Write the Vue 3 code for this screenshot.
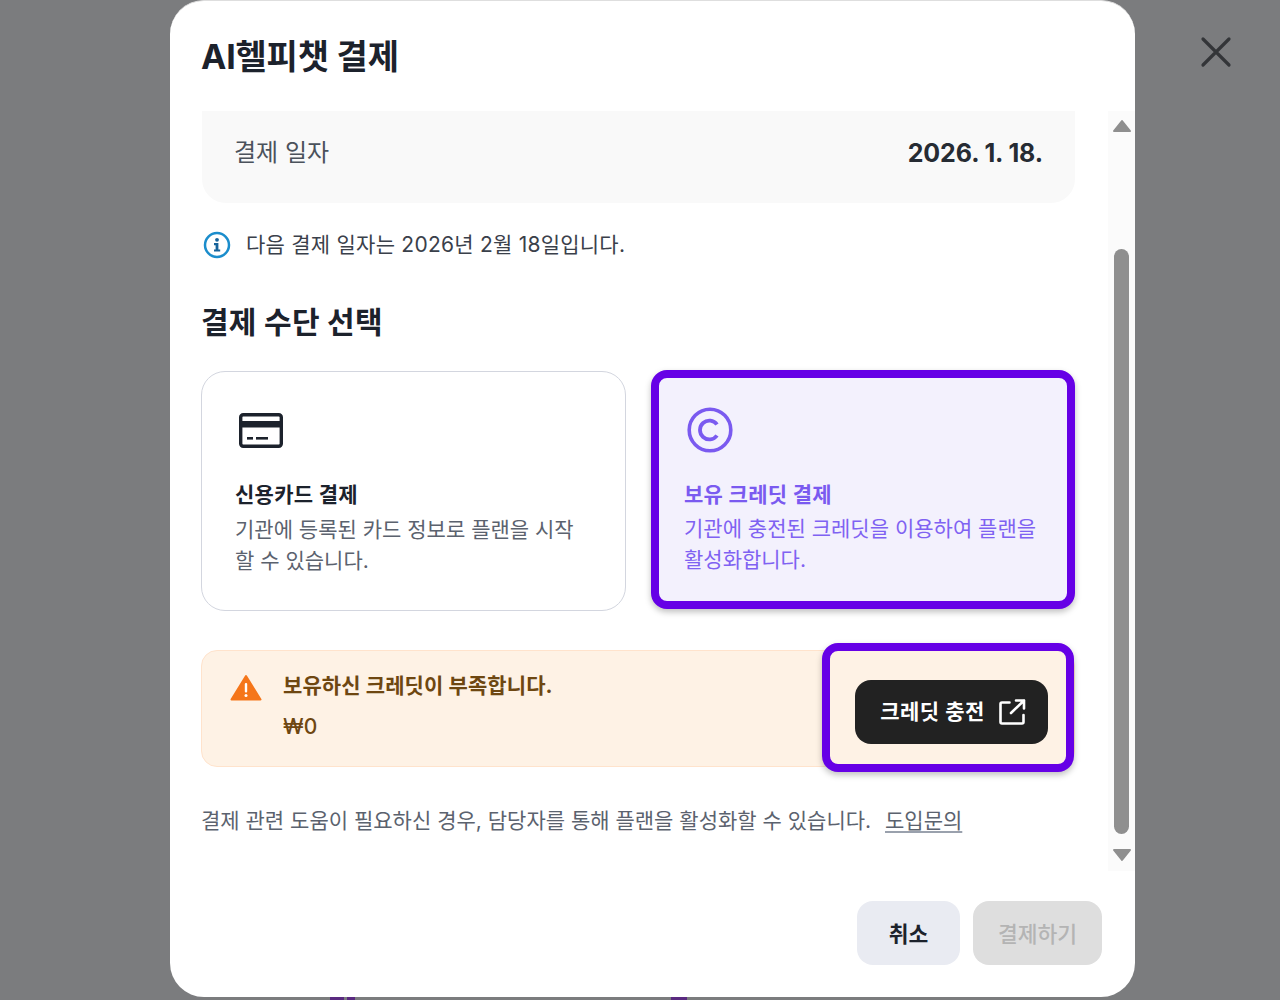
<script setup>
// 결제 수단 카드 목록
const methods = [
  {
    id: 'card',
    title: '신용카드 결제',
    desc: '기관에 등록된 카드 정보로 플랜을 시작할 수 있습니다.',
    selected: false
  },
  {
    id: 'credit',
    title: '보유 크레딧 결제',
    desc: '기관에 충전된 크레딧을 이용하여 플랜을 활성화합니다.',
    selected: true
  }
]
</script>

<template>
  <div class="overlay">
    <div class="modal">
      <h1 class="title">AI헬피챗 결제</h1>

      <div class="scroll-area">
        <div class="content">
          <div class="date-panel">
            <span class="date-label">결제 일자</span>
            <strong class="date-value">2026. 1. 18.</strong>
          </div>

          <div class="next-date">
            <svg class="info-icon" width="28" height="28" viewBox="0 0 28 28">
              <circle cx="14" cy="14" r="12" fill="none" stroke="#1b8dcc" stroke-width="2.5" />
              <circle cx="14" cy="8.8" r="1.9" fill="#17639a" />
              <path d="M11 12h4.4v6.4h1.8v2.2h-6.2v-2.2h1.6v-4.2H11z" fill="#17639a" />
            </svg>
            <span>다음 결제 일자는 2026년 2월 18일입니다.</span>
          </div>

          <h2 class="section-title">결제 수단 선택</h2>

          <div class="methods">
            <div
              v-for="method in methods"
              :key="method.id"
              class="method"
              :class="{ selected: method.selected }"
            >
              <svg v-if="method.id === 'card'" class="method-icon" width="48" height="48" viewBox="0 0 48 48">
                <rect x="3.7" y="7.7" width="40.6" height="31.6" rx="2.5" fill="none" stroke="#1c222c" stroke-width="3.4" />
                <rect x="4" y="14" width="40" height="6.5" fill="#1c222c" />
                <rect x="10" y="30" width="6" height="2.6" fill="#1c222c" />
                <rect x="19" y="30" width="12" height="2.6" fill="#1c222c" />
              </svg>
              <svg v-else class="method-icon" width="48" height="48" viewBox="0 0 48 48">
                <circle cx="24" cy="24" r="20.8" fill="none" stroke="#7a5af0" stroke-width="3.6" />
                <path d="M31 18.5a9.4 9.4 0 1 0 0 11" fill="none" stroke="#7a5af0" stroke-width="3.8" />
              </svg>
              <div class="method-title">{{ method.title }}</div>
              <p class="method-desc">{{ method.desc }}</p>
            </div>
          </div>

          <div class="alert">
            <svg class="alert-icon" width="32" height="28" viewBox="0 0 32 28">
              <path d="M16 2 30.5 25.5H1.5z" fill="#f5761a" stroke="#f5761a" stroke-width="2" stroke-linejoin="round" />
              <rect x="14.8" y="9" width="2.4" height="9.5" rx="1.1" fill="#fff" />
              <circle cx="16" cy="21.6" r="1.5" fill="#fff" />
            </svg>
            <div class="alert-text">
              <div class="alert-title">보유하신 크레딧이 부족합니다.</div>
              <div class="alert-amount">₩0</div>
            </div>
            <div class="charge-highlight">
              <button class="charge-btn" type="button">
                <span class="charge-label">크레딧 충전</span>
                <svg width="28" height="28" viewBox="0 0 28 28" fill="none" stroke="#fff" stroke-width="2.6" stroke-linejoin="round" stroke-linecap="round">
                  <path d="M11.5 4.5H4a1.5 1.5 0 0 0-1.5 1.5v18A1.5 1.5 0 0 0 4 25.5h20a1.5 1.5 0 0 0 1.5-1.5v-7" />
                  <path d="M13 15 26 2.5M18 2.5h8v8" />
                </svg>
              </button>
            </div>
          </div>

          <p class="help">
            결제 관련 도움이 필요하신 경우, 담당자를 통해 플랜을 활성화할 수 있습니다.
            <a class="help-link">도입문의</a>
          </p>
        </div>

        <div class="scrollbar">
          <svg width="20" height="14" viewBox="0 0 20 14"><path d="M10 2 18 12H2z" fill="#8f8f8f" stroke="#8f8f8f" stroke-width="2" stroke-linejoin="round" /></svg>
          <div class="thumb"></div>
          <svg width="20" height="14" viewBox="0 0 20 14"><path d="M2 2H18L10 12z" fill="#8f8f8f" stroke="#8f8f8f" stroke-width="2" stroke-linejoin="round" /></svg>
        </div>
      </div>

      <div class="footer">
        <button class="btn btn-cancel" type="button">취소</button>
        <button class="btn btn-pay" type="button" disabled>결제하기</button>
      </div>
    </div>

    <button class="close" type="button" aria-label="닫기">
      <svg width="32" height="32" viewBox="0 0 32 32" fill="none" stroke="#333538" stroke-width="3.2" stroke-linecap="round">
        <path d="M3 3 29 29M29 3 3 29" />
      </svg>
    </button>

    <span class="peek peek-a"></span>
    <span class="peek peek-b"></span>
    <span class="peek peek-c"></span>
  </div>
</template>

<style>
html,
body {
  margin: 0;
  background: #7b7c7e;
}
</style>

<style scoped>
.overlay {
  position: relative;
  width: 1280px;
  height: 1000px;
  overflow: hidden;
  background: #7b7c7e;
  font-family: Inter, "Noto Sans CJK KR", "Noto Sans", sans-serif;
}
.modal {
  box-sizing: border-box;
  display: flex;
  flex-direction: column;
  width: 965px;
  height: 997px;
  margin-left: 170px;
  background: #fff;
  border-top: 1px solid #dedede;
  border-radius: 34px;
  overflow: hidden;
}
.title {
  margin: 0;
  height: 110px;
  padding-left: 31px;
  font-size: 34px;
  font-weight: 700;
  line-height: 112px;
  color: #1c222c;
  letter-spacing: -0.2px;
}
.scroll-area {
  display: flex;
  height: 760px;
}
.content {
  flex: 1;
  min-width: 0;
  padding: 0 33px 0 32px;
}
.date-panel {
  box-sizing: border-box;
  display: flex;
  align-items: center;
  justify-content: space-between;
  height: 92px;
  padding: 0 32px 14px;
  background: #f9f9f9;
  border-radius: 0 0 24px 24px;
  font-size: 24px;
}
.date-label {
  color: #4b525c;
}
.date-value {
  margin-top: 6px;
  color: #262b33;
  font-size: 25px;
  font-weight: 700;
  letter-spacing: -0.1px;
}
.next-date {
  display: flex;
  align-items: center;
  gap: 15px;
  height: 28px;
  margin-top: 26px;
  font-size: 21px;
  letter-spacing: 0.24px;
  color: #3a404a;
}
.info-icon {
  flex: none;
  margin: 4px 0 0 1px;
}
.section-title {
  margin: 45px 0 0 -1px;
  font-size: 30px;
  font-weight: 700;
  line-height: 40px;
  letter-spacing: 0.25px;
  color: #1c222c;
}
.methods {
  display: grid;
  grid-template-columns: 425px 424px;
  gap: 25px;
  align-items: start;
  margin: 29px 0 0 -1px;
}
.method {
  box-sizing: border-box;
  height: 240px;
  padding: 35px 46px 0 33px;
  background: #fff;
  border: 1px solid #d3d6df;
  border-radius: 24px;
  color: #1c222c;
}
.method.selected {
  height: 239px;
  margin-top: -1px;
  padding: 28px 20px 0 25px;
  background: #f3f1fd;
  border: 8px solid #6600e6;
  border-radius: 16px;
  box-shadow: 0 3px 6px rgba(0, 0, 0, 0.25);
  color: #7a5af0;
}
.method-icon {
  display: block;
  margin-left: 2px;
}
.method-title {
  margin-top: 24px;
  font-size: 21px;
  font-weight: 700;
  line-height: 31px;
  letter-spacing: 0.3px;
}
.method.selected .method-title {
  margin-top: 25px;
}
.method-desc {
  margin: 4px 0 0;
  font-size: 21px;
  line-height: 31px;
  color: #5b626e;
  word-break: break-all;
}
.method.selected .method-desc {
  margin-top: 3px;
  color: #7f62f2;
  word-break: keep-all;
}
.alert {
  position: relative;
  box-sizing: border-box;
  display: flex;
  align-items: flex-start;
  gap: 21px;
  height: 117px;
  margin: 39px 0 0 -1px;
  padding: 21px 0 0 28px;
  background: #fef2e5;
  border: 1px solid #ffe3cc;
  border-radius: 16px;
}
.alert-icon {
  flex: none;
  margin-top: 2px;
}
.alert-title {
  font-size: 21px;
  font-weight: 700;
  line-height: 28px;
  letter-spacing: 0.1px;
  color: #6e4711;
}
.alert-amount {
  margin-top: 13px;
  font-size: 21px;
  font-weight: 500;
  line-height: 28px;
  color: #6e4711;
}
/* 가이드 하이라이트가 충전 버튼 위에 겹쳐지는 박스 */
.charge-highlight {
  position: absolute;
  top: -8px;
  right: 0;
  box-sizing: border-box;
  display: flex;
  align-items: center;
  justify-content: center;
  width: 252px;
  height: 129px;
  background: #fef2e5;
  border: 8px solid #6600e6;
  border-radius: 16px;
  box-shadow: 0 3px 6px rgba(0, 0, 0, 0.25);
}
.charge-btn {
  box-sizing: border-box;
  display: flex;
  align-items: center;
  justify-content: center;
  gap: 13px;
  flex: none;
  width: 193px;
  height: 64px;
  padding: 0 0 0 4px;
  margin: 8px 0 0 6px;
  background: #222;
  border: 0;
  border-radius: 16px;
  color: #fff;
  font-family: inherit;
  font-size: 21px;
  font-weight: 700;
}
.charge-label {
  margin-bottom: 4px;
  letter-spacing: 0.5px;
}
.help {
  margin: 39px 0 0 -1px;
  font-size: 21px;
  line-height: 30px;
  color: #5b626e;
  white-space: nowrap;
}
.help-link {
  margin-left: 8px;
  color: #5b626e;
  text-decoration: underline;
  text-decoration-color: #9aa1ad;
  text-underline-offset: 3px;
}
.scrollbar {
  flex: none;
  box-sizing: border-box;
  display: flex;
  flex-direction: column;
  align-items: center;
  width: 27px;
  padding-top: 8px;
  background: #fbfbfb;
}
.thumb {
  width: 15px;
  height: 585px;
  margin: 116px 0 14px;
  background: #8f8f8f;
  border-radius: 8px;
}
.footer {
  display: flex;
  justify-content: flex-end;
  gap: 13px;
  padding: 30px 33px 0 0;
}
.btn {
  height: 64px;
  padding: 0 0 2px;
  border: 0;
  border-radius: 16px;
  font-family: inherit;
  font-size: 21.5px;
}
.btn-cancel {
  width: 103px;
  background: #e9ebf2;
  color: #1c222c;
  font-weight: 700;
}
.btn-pay {
  width: 129px;
  background: #dedede;
  color: #b4b4b4;
  font-weight: 500;
}
.close {
  position: absolute;
  top: 36px;
  left: 1200px;
  width: 32px;
  height: 32px;
  padding: 0;
  background: none;
  border: 0;
}
/* 모달 뒤 배경 화면이 아래쪽에 살짝 보이는 부분 */
.peek {
  position: absolute;
  bottom: 0;
  height: 3px;
  background: #5a2a80;
}
.peek-a {
  left: 330px;
  width: 14px;
}
.peek-b {
  left: 347px;
  width: 8px;
}
.peek-c {
  left: 671px;
  width: 16px;
}
</style>
